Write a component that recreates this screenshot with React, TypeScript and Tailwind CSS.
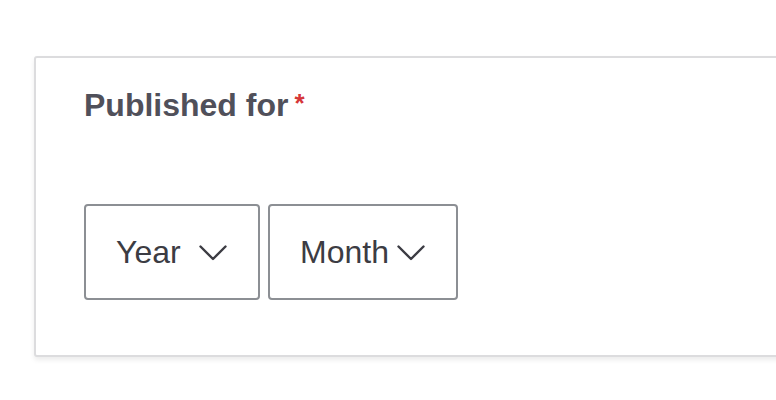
function Chevron() {
  return (
    <svg width="28" height="16" viewBox="0 0 28 16" fill="none" className="block">
      <polyline points="1.5,1.5 14,14 26.5,1.5" stroke="#3c3c43" strokeWidth="2.4" strokeLinecap="round" strokeLinejoin="round" />
    </svg>
  );
}

function FakeSelect({ label, width }: { label: string; width: string }) {
  return (
    <div
      className={`relative flex h-[96px] items-center rounded-[4px] border-2 border-[#8c8f94] bg-white pl-[30px] text-[32px] text-[#3c3c43] ${width}`}
    >
      <span className="leading-normal">{label}</span>
      <span className="absolute right-[31px] top-[39px]">
        <Chevron />
      </span>
    </div>
  );
}

export default function App() {
  return (
    <div
      className="min-h-[400px] w-full overflow-hidden bg-white pl-[34px] pt-[56px]"
      style={{ fontFamily: '"Liberation Sans", Arial, sans-serif' }}
    >
      <div className="w-[800px] rounded-[3px] border-2 border-[#dcdcde] bg-white px-[48px] pb-[55px] pt-[27px] shadow-[0_3px_5px_rgba(0,0,0,0.08)]">
        <div className="h-[40px] text-[32px] font-bold leading-[40px] text-[#50505a]">
          Published for
          <span className="ml-[6px] align-top text-[26px] leading-[36px] text-[#d63638]">*</span>
        </div>
        <div className="mt-[79px] flex gap-[8px]">
          <FakeSelect label="Year" width="w-[176px]" />
          <FakeSelect label="Month" width="w-[190px]" />
        </div>
      </div>
    </div>
  );
}
